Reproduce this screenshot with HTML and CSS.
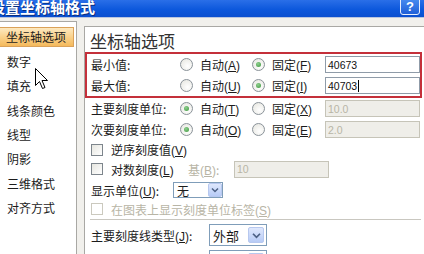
FILE: index.html
```html
<!DOCTYPE html>
<html lang="zh-CN">
<head>
<meta charset="utf-8">
<title>设置坐标轴格式</title>
<link rel="stylesheet" href="styles.css">
</head>
<body>
<div class="window">
  <div class="titlebar">
    <span class="title">设置坐标轴格式</span>
    <span class="help">?</span>
  </div>
  <div class="content">
    <ul class="nav">
      <li class="nav-item is-active">坐标轴选项</li>
      <li class="nav-item">数字</li>
      <li class="nav-item">填充</li>
      <li class="nav-item">线条颜色</li>
      <li class="nav-item">线型</li>
      <li class="nav-item">阴影</li>
      <li class="nav-item">三维格式</li>
      <li class="nav-item">对齐方式</li>
    </ul>
    <section class="panel">
      <h2 class="panel-title">坐标轴选项</h2>
      <div class="highlight">
        <div class="row">
          <span class="label">最小值:</span>
          <span class="opt"><span class="radio"></span><span>自动<span class="key">(<u>A</u>)</span></span></span>
          <span class="opt opt-fixed"><span class="radio is-on"></span><span>固定<span class="key">(<u>F</u>)</span></span></span>
          <span class="field">40673</span>
        </div>
        <div class="row">
          <span class="label">最大值:</span>
          <span class="opt"><span class="radio"></span><span>自动<span class="key">(<u>U</u>)</span></span></span>
          <span class="opt opt-fixed"><span class="radio is-on"></span><span>固定<span class="key">(<u>I</u>)</span></span></span>
          <span class="field">40703<span class="caret"></span></span>
        </div>
      </div>
      <div class="row">
        <span class="label">主要刻度单位:</span>
        <span class="opt"><span class="radio is-on"></span><span>自动<span class="key">(<u>T</u>)</span></span></span>
        <span class="opt opt-fixed"><span class="radio"></span><span>固定<span class="key">(<u>X</u>)</span></span></span>
        <span class="field is-disabled">10.0</span>
      </div>
      <div class="row">
        <span class="label">次要刻度单位:</span>
        <span class="opt"><span class="radio is-on"></span><span>自动<span class="key">(<u>O</u>)</span></span></span>
        <span class="opt opt-fixed"><span class="radio"></span><span>固定<span class="key">(<u>E</u>)</span></span></span>
        <span class="field is-disabled">2.0</span>
      </div>
      <div class="check-row">
        <span class="check"></span><span>逆序刻度值<span class="key">(<u>V</u>)</span></span>
      </div>
      <div class="check-row check-log">
        <span class="check-label"><span class="check"></span><span>对数刻度<span class="key">(<u>L</u>)</span></span></span>
        <span class="base-label">基<span class="key">(<u>B</u>)</span>:</span>
        <span class="field is-disabled">10</span>
      </div>
      <div class="select-row unit-row">
        <span class="unit-label">显示单位<span class="key">(<u>U</u>)</span>:</span>
        <span class="select select-small">无<span class="select-btn"><svg viewBox="0 0 10 8" width="8" height="6"><path d="M1 2 L5 6 L9 2" fill="none" stroke="#4d6185" stroke-width="2"/></svg></span></span>
      </div>
      <div class="check-row is-disabled">
        <span class="check"></span><span>在图表上显示刻度单位标签<span class="key">(<u>S</u>)</span></span>
      </div>
      <hr class="sep">
      <div class="select-row tick-row">
        <span class="tick-label">主要刻度线类型<span class="key">(<u>J</u>)</span>:</span>
        <span class="select select-large">外部<span class="select-btn"><svg viewBox="0 0 10 8" width="9" height="7"><path d="M1 2 L5 6 L9 2" fill="none" stroke="#4d6185" stroke-width="2"/></svg></span></span>
      </div>
      <div class="select-row tick-row">
        <span class="tick-label">次要刻度线类型<span class="key">(<u>I</u>)</span>:</span>
        <span class="select select-large">无<span class="select-btn"></span></span>
      </div>
    </section>
  </div>
  <svg class="cursor" viewBox="0 0 13 22" width="13" height="22">
    <path d="M0.5 0.5 L0.5 17.5 L4.5 13.5 L7.5 20.5 L10 19.5 L7 12.5 L12.5 12.5 Z" fill="#fff" stroke="#000" stroke-width="1" stroke-linejoin="miter"/>
  </svg>
</div>
</body>
</html>
```

FILE: styles.css
```css
* {
  box-sizing: border-box;
  margin: 0;
  padding: 0;
}

html,
body {
  width: 424px;
  height: 254px;
  overflow: hidden;
}

body {
  font-family: "Noto Sans CJK SC", "Noto Sans", sans-serif;
  font-size: 12px;
  color: #1c1c1c;
  background: #f1f0ec;
}

u {
  text-decoration: underline;
  text-underline-offset: 1px;
}

.key {
  font-family: "Liberation Sans", "DejaVu Sans", sans-serif;
  font-size: 12px;
}

.window {
  position: relative;
  width: 424px;
  height: 254px;
  overflow: hidden;
}

/* title bar */
.titlebar {
  height: 18px;
  display: flex;
  align-items: flex-start;
  justify-content: space-between;
  padding-right: 4px;
  background: linear-gradient(#2a6fe8, #0d58dc 55%, #0a4fd0);
  border-bottom: 1px solid #b9c6e0;
}

.title {
  margin-left: -10px;
  font-size: 15px;
  font-weight: bold;
  line-height: 13px;
  color: #fff;
  text-shadow: 1px 1px 0 #0a2f80;
  white-space: nowrap;
}

.help {
  width: 20px;
  height: 18px;
  margin-top: -3px;
  display: flex;
  align-items: flex-end;
  justify-content: center;
  padding-bottom: 1px;
  font-family: "Liberation Sans", sans-serif;
  font-weight: bold;
  font-size: 13px;
  line-height: 13px;
  color: #fff;
  background: linear-gradient(#4b8ff2, #1f5fd8);
  border: 1px solid #e8eefc;
  border-radius: 3px;
}

/* content */
.content {
  display: flex;
  align-items: flex-start;
  padding-top: 3px;
}

.nav {
  list-style: none;
  width: 77px;
  height: 240px;
  flex: none;
  padding-top: 2.8px;
  background: #fff;
  border: 1px solid #a9a8a4;
  border-left: none;
}

.nav-item {
  height: 24.4px;
  display: flex;
  align-items: center;
  padding-left: 7px;
  white-space: nowrap;
}

.nav-item.is-active {
  height: 20px;
  margin: 2.2px 2px 2.2px 0;
  padding-left: 6px;
  background: linear-gradient(#fde9c0, #f9cf86 55%, #f4b95c);
  border: 1px solid #dba259;
  border-left: none;
}

.panel {
  flex: 1;
  height: 240px;
  margin: 5px -2px 0 7px;
  padding: 4px 0 0 6px;
  background: #fff;
  border: 1px solid #a9a8a4;
}

.panel-title {
  margin-left: -1px;
  font-size: 17px;
  font-weight: normal;
  line-height: 20px;
  color: #333;
}

.highlight {
  width: 337px;
  margin: 1px 0 0 -6px;
  padding-left: 4px;
  border: 2px solid #c4303a;
}

.row {
  height: 21px;
  display: flex;
  align-items: center;
  white-space: nowrap;
}

.label {
  width: 89px;
  flex: none;
}

.opt {
  width: 72px;
  flex: none;
  display: flex;
  align-items: center;
  gap: 7px;
}

.opt-fixed {
  width: 73px;
}

.radio {
  width: 13px;
  height: 13px;
  flex: none;
  border-radius: 50%;
  border: 1px solid #8a9299;
  background: radial-gradient(circle at 60% 65%, #ffffff, #e4e4dd);
  display: flex;
  align-items: center;
  justify-content: center;
}

.radio.is-on::after {
  content: "";
  width: 5px;
  height: 5px;
  border-radius: 50%;
  background: radial-gradient(circle at 40% 35%, #8fcf8f, #3c963c);
}

.field {
  width: 95px;
  height: 17px;
  flex: none;
  display: flex;
  align-items: center;
  padding-left: 2px;
  font-family: "Liberation Sans", sans-serif;
  font-size: 10.5px;
  color: #111;
  background: #fff;
  border: 1px solid #8f9ba8;
}

.field.is-disabled {
  color: #b8b5a6;
  background: #efeee9;
  border-color: #c6c4b8;
}

.caret {
  width: 1px;
  height: 12px;
  margin-left: 1px;
  background: #000;
}

.check-row {
  height: 19px;
  display: flex;
  align-items: center;
  gap: 8px;
  white-space: nowrap;
}

.check-log {
  height: 20px;
  gap: 0;
}

.check-label {
  width: 97px;
  flex: none;
  display: flex;
  align-items: center;
  gap: 8px;
}

.base-label {
  width: 46px;
  flex: none;
  color: #b8b5a6;
}

.check {
  width: 12px;
  height: 12px;
  flex: none;
  border: 1px solid #7d858c;
  background: linear-gradient(135deg, #e6e6e0, #ffffff);
}

.check-row.is-disabled {
  height: 18px;
  color: #b8b5a6;
}

.check-row.is-disabled .check {
  border-color: #cbc9be;
  background: #fff;
}

.select-row {
  display: flex;
  align-items: center;
  white-space: nowrap;
}

.unit-row {
  height: 20px;
  margin-top: 1px;
}

.unit-label {
  width: 82px;
  flex: none;
}

.select {
  display: flex;
  align-items: center;
  justify-content: space-between;
  flex: none;
  background: #fff;
  border: 1px solid #7f9db9;
}

.select-small {
  width: 50px;
  height: 16px;
  padding: 0 0 0 3px;
}

.select-small .select-btn {
  width: 14px;
  height: 14px;
}

.select-large {
  width: 58px;
  height: 22px;
  padding-left: 3px;
  font-size: 13px;
}

.select-large .select-btn {
  width: 16px;
  height: 16px;
  margin-right: 2px;
}

.select-btn {
  display: flex;
  align-items: center;
  justify-content: center;
  background: linear-gradient(#dfe8fd, #b7cbf6);
  border: 1px solid #b7c8ef;
  border-radius: 2px;
}

.sep {
  height: 0;
  margin: 1px 0 4px -1px;
  width: 331px;
  border: none;
  border-top: 1px solid #c9c7c0;
}

.tick-row {
  height: 22px;
  margin-bottom: 4px;
}

.tick-label {
  width: 118px;
  flex: none;
}

.cursor {
  position: absolute;
  left: 35px;
  top: 68px;
}
```
